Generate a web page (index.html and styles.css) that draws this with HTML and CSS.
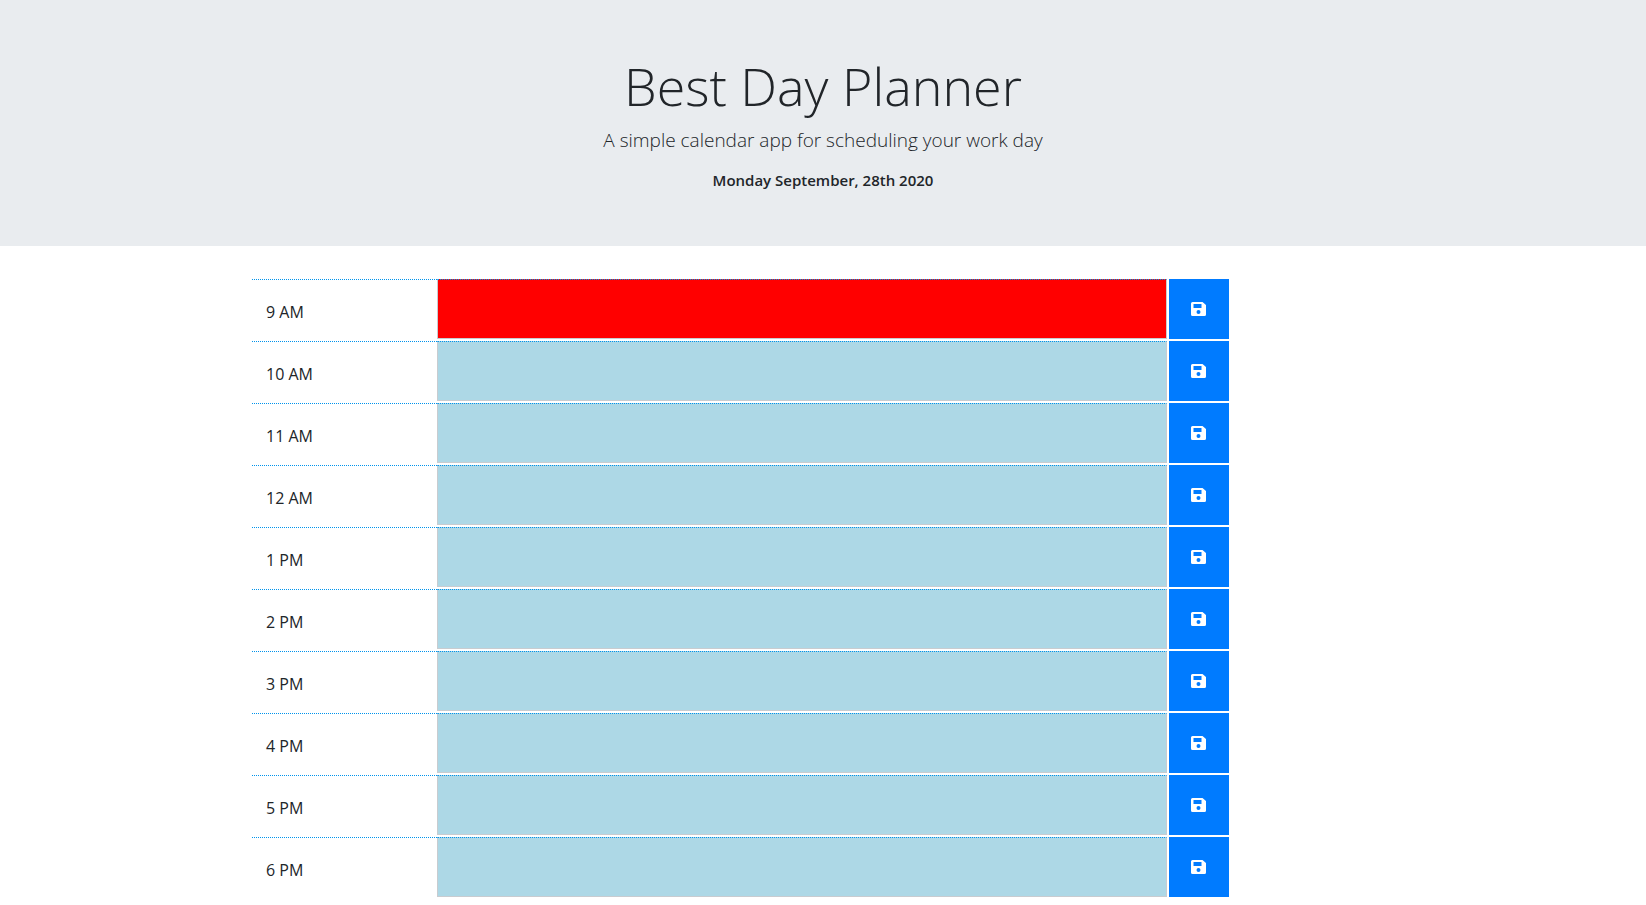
FILE: index.html
```
<!DOCTYPE html>
<html lang="en">
<head>
<meta charset="utf-8">
<meta name="viewport" content="width=device-width, initial-scale=1">
<title>Best Day Planner</title>
<link rel="stylesheet" href="styles.css">
</head>
<body>
<header class="jumbotron">
  <h1 class="title">Best Day Planner</h1>
  <p class="lead">A simple calendar app for scheduling your work day</p>
  <p class="current-day">Monday September, 28th 2020</p>
</header>
<main class="container" id="planner"></main>
<template id="row-template">
  <div class="time-block">
    <label class="hour"></label>
    <textarea class="description future"></textarea>
    <button class="save" type="button">
      <svg class="save-icon" viewBox="0 0 16 14" aria-hidden="true">
        <path fill="currentColor" fill-rule="evenodd" d="M1.5 0H11.5L15 3V12.500Q15 14 13.500 14H1.500Q0 14 0 12.500V1.500Q0 0 1.500 0ZM2.500 2V6H10.500V2ZM7.500 8A2 2 0 1 0 7.500 12A2 2 0 1 0 7.500 8Z"/>
      </svg>
    </button>
  </div>
</template>
<script src="script.js"></script>
</body>
</html>
```
FILE: styles.css
```
* {
  box-sizing: border-box;
}

body {
  margin: 0;
  background: #fff;
  color: #212529;
  font-family: "Open Sans", "Noto Sans", sans-serif;
  font-size: 16px;
  line-height: 24px;
}

.jumbotron {
  margin-bottom: 33px;
  padding: 52px 32px 38px;
  background: #e9ecef;
  text-align: center;
}

.title {
  margin: 0 0 4px;
  font-size: 52px;
  font-weight: 300;
  line-height: 68px;
}

.lead {
  margin: 0 0 12px;
  font-size: 19px;
  font-weight: 300;
  line-height: 32px;
}

.current-day {
  margin: 0 0 16px;
  font-size: 15px;
  font-weight: 600;
}

.container {
  display: flex;
  flex-direction: column;
  gap: 2px;
  max-width: 1142px;
  margin: 0 auto;
}

.time-block {
  display: grid;
  grid-template-columns: 185fr 730fr 2fr 60px 165fr;
  height: 60px;
}

.hour {
  padding: 20px 14px 0;
  border-top: 1px dotted #0094ed;
  font-size: 16px;
}

.description {
  width: 100%;
  height: 60px;
  margin: 0;
  padding: 8px;
  border: 1px solid #c8ccd0;
  border-top: 1px dotted #0094ed;
  border-radius: 0;
  outline: 0;
  resize: none;
  color: #212529;
  font: inherit;
}

.future {
  background: #add8e6;
}

.present {
  background: #f00;
}

.save {
  display: flex;
  grid-column: 4;
  align-items: center;
  justify-content: center;
  padding: 0;
  border: 0;
  background: #007bff;
  color: #fff;
  cursor: pointer;
}

.save-icon {
  width: 16px;
  height: 14px;
}
```
FILE: script.js
```
const hours = ["9 AM", "10 AM", "11 AM", "12 AM", "1 PM", "2 PM", "3 PM", "4 PM", "5 PM", "6 PM"];
const currentHour = "9 AM";
const planner = document.getElementById("planner");
const template = document.getElementById("row-template");

hours.forEach((hour, index) => {
  const row = template.content.cloneNode(true);
  const label = row.querySelector(".hour");
  const entry = row.querySelector(".description");
  label.textContent = hour;
  label.htmlFor = entry.id = "entry-" + index;
  if (hour === currentHour) {
    entry.classList.replace("future", "present");
  }
  row.querySelector(".save").setAttribute("aria-label", "Save " + hour);
  planner.append(row);
});
```
